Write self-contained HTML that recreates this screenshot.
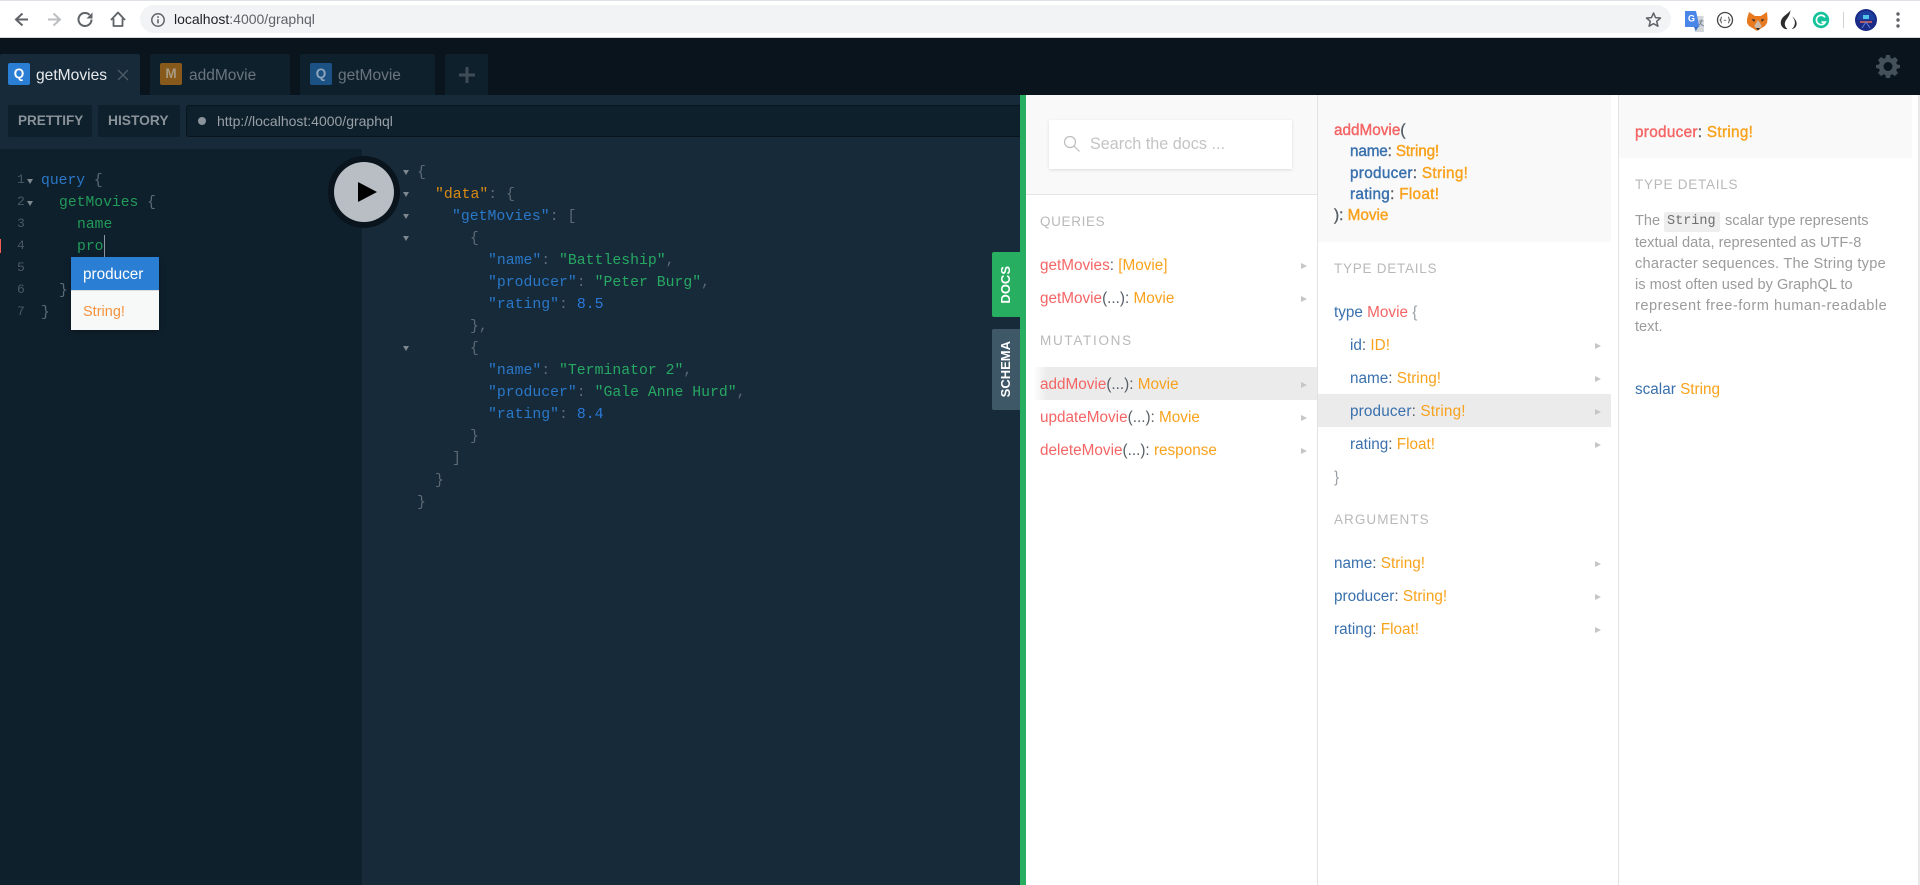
<!DOCTYPE html>
<html><head><meta charset="utf-8"><title>GraphQL Playground</title>
<style>
html,body{margin:0;padding:0;width:1920px;height:885px;overflow:hidden;background:#0f202d;font-family:"Liberation Sans",sans-serif}
.a{position:absolute}
.t{position:absolute;white-space:pre;line-height:22px;font-size:15.3px}
.m{position:absolute;white-space:pre;line-height:22px;font-family:"Liberation Mono",monospace;font-size:14.7px;color:#5c6a75}
.x{font-size:14.8px}
.n{color:#4a5863}
.k{color:#2a78c8}.f{color:#219b58}.g{color:#27a862}.o{color:#d98a12}.u{color:#2a78d8}
.r{color:#f56565}.y{color:#f9a21c}.b{color:#3970ad}.d{color:#555e66}
.s{-webkit-text-stroke:.4px currentColor}
.h{position:absolute;white-space:pre;line-height:20px;font-size:13.5px;letter-spacing:1.05px;color:#b9b9b9}
.ar{position:absolute;width:0;height:0;border-left:6px solid #c6c6c6;border-top:3.5px solid transparent;border-bottom:3.5px solid transparent}
.fd{position:absolute;width:0;height:0;border-top:5px solid #7d8790;border-left:3.5px solid transparent;border-right:3.5px solid transparent}
.tab{position:absolute;top:54px;height:41px}
.ic{position:absolute;top:63px;width:22px;height:22px;border-radius:2px;font-weight:700;font-size:13.5px;line-height:22px;text-align:center}
.p{position:absolute;color:#9b9b9b;white-space:pre;line-height:21px;font-size:14.6px;left:1635px}
</style></head><body>

<!-- browser chrome -->
<div class="a" style="left:0;top:0;width:1920px;height:38px;background:#fff"></div>
<div class="a" style="left:0;top:0;width:1920px;height:1px;background:#dee1e6"></div>
<div class="a" style="left:0;top:37px;width:1920px;height:1px;background:#d4d6da"></div>
<svg class="a" style="left:0;top:0" width="180" height="38" viewBox="0 0 180 38" fill="none">
<path d="M28 19.5H17M22.5 13.5L16 19.5l6.500 6" stroke="#5f6368" stroke-width="2"/>
<path d="M48 19.500H59M53.500 13.500L60 19.500l-6.500 6" stroke="#bcbec0" stroke-width="2"/>
<path d="M91.500 19.500a6.500 6.500 0 1 1-1.900-4.600" stroke="#5f6368" stroke-width="2"/>
<path d="M92.500 12.500v6h-6z" fill="#5f6368"/>
<path d="M111 20l7-7.500 7 7.500M113.500 18.500V26h9v-7.500" stroke="#5f6368" stroke-width="1.800" stroke-linejoin="round"/>
</svg>
<div class="a" style="left:140px;top:5px;width:1531px;height:28px;border-radius:14px;background:#f1f3f4"></div>
<svg class="a" style="left:150px;top:12px" width="16" height="16" viewBox="0 0 16 16" fill="none"><circle cx="8" cy="8" r="6.200" stroke="#5f6368" stroke-width="1.500"/><path d="M8 7.200v4.200M8 4.300v1.600" stroke="#5f6368" stroke-width="1.600"/></svg>
<div class="t" style="left:174px;top:8px;font-size:14px;color:#5f6368"><span style="color:#202124">localhost</span>:4000/graphql</div>
<svg class="a" style="left:1645px;top:11px" width="17" height="17" viewBox="0 0 17 17" fill="none"><path d="M8.500 2l2 4.600 5 .4-3.800 3.300 1.200 4.900-4.400-2.600-4.400 2.600 1.200-4.900L1.500 7l5-.4z" stroke="#5f6368" stroke-width="1.500" stroke-linejoin="round"/></svg>
<svg class="a" style="left:1680px;top:6px" width="240" height="28" viewBox="0 0 240 28" fill="none">
<path d="M13 10h10.500l.500 16h-9z" fill="#d2d5d9"/><path d="M5 5h11l3.500 16H5z" fill="#4a86e8"/><path d="M14 21l1.800 4 2.500-4z" fill="#3a6fc4"/>
<text x="8" y="15.500" font-family="Liberation Sans" font-size="9" font-weight="700" fill="#fff">G</text><path d="M19 15h4.500M21.500 13.500c-.2 3-1.500 5-3 6M20 16c.6 2 2 3.300 3.800 4" stroke="#7d8a98" stroke-width="1"/>
<circle cx="45" cy="14" r="7.500" stroke="#444" stroke-width="1.300"/><path d="M41.800 11c-1 0-.6 2.700-1.400 3 .8.300.4 3 1.400 3M48.200 11c1 0 .6 2.700 1.400 3-.8.300-.4 3-1.400 3" stroke="#444" stroke-width="1"/><path d="M43.800 14.300h2.400" stroke="#777" stroke-width="1"/>
<path d="M69 6l6 4h6l6-4 .6 7-.6 4-2 3-5 3-2 1.500h-2L74 23l-5-3-2-3 0-4z" fill="#e8791f"/><path d="M78 14l-3.800 6 2 2.500h3.600l2-2.500z" fill="#cdb9a8"/><path d="M71.500 13l3.500 .5-.8 2.500zM84.500 13l-3.500 .5 .8 2.500z" fill="#35312f"/><path d="M76 22l2 2.500 2-2.500z" fill="#2c2621"/>
<path d="M110.500 4c-1.500 3-6 5-8.500 8.500-2 3.200-1.500 7 1 9.200 1 .9 2.800 1.800 4.500 1.300-2.400-1.800-3.400-4.600-2.200-7.500 1-2.500 4.500-5 5.200-11.500z" fill="#2c2c2c"/><path d="M112 10.500c2.500 2.500 3.500 5.500 2.600 8.200-.4 1.500-1.400 3.300-3 4.300 2.500 0 4.700-1.900 5-4.700.4-3-1.800-6-4.600-7.800z" fill="#2c2c2c"/>
<circle cx="141" cy="14" r="8.200" fill="#15c39a"/><path d="M145 11.300a4.700 4.700 0 1 0 .3 4.800h-3.800" stroke="#fff" stroke-width="1.700"/>
<rect x="163" y="6" width="1" height="16" fill="#cfd1d4"/>
<circle cx="186" cy="14" r="11" fill="#1a2a85"/><path d="M186 5a9 9 0 0 1 9 9h-18a9 9 0 0 1 9-9z" fill="#1d3fa0"/><rect x="183" y="9" width="6" height="4" fill="#4fc3e8"/><path d="M180 16h12" stroke="#e56b5a" stroke-width="1.500"/><path d="M182 22l4-6 4 6" stroke="#5f82d8" stroke-width="1"/>
<circle cx="218" cy="8" r="1.700" fill="#5f6368"/><circle cx="218" cy="14" r="1.700" fill="#5f6368"/><circle cx="218" cy="20" r="1.700" fill="#5f6368"/>
</svg>

<!-- tab bar -->
<div class="a" style="left:0;top:38px;width:1920px;height:57px;background:#0a141c"></div>
<div class="tab" style="left:0;width:140px;background:#172a3a;border-radius:2px 2px 0 0"></div>
<div class="tab" style="left:150px;width:140px;background:#0f202d;border-radius:2px 2px 0 0"></div>
<div class="tab" style="left:300px;width:135px;background:#0f202d;border-radius:2px 2px 0 0"></div>
<div class="tab" style="left:445px;width:43px;background:#0f202d;border-radius:2px 2px 0 0"></div>
<div class="ic" style="left:8px;background:#2a7ed3;color:#fff">Q</div>
<div class="ic" style="left:160px;background:#87591a;color:#a99b83">M</div>
<div class="ic" style="left:310px;background:#1c5184;color:#8fa6bd">Q</div>
<div class="t" style="left:36px;top:65px;color:#e8eaec;font-size:15.6px">getMovies</div>
<svg class="a" style="left:117px;top:69px" width="12" height="12" fill="none"><path d="M1 1l10 10M11 1L1 11" stroke="#4f5b65" stroke-width="1.300"/></svg>
<div class="t" style="left:189px;top:65px;color:#6a757e;font-size:15.5px">addMovie</div>
<div class="t" style="left:338px;top:65px;color:#6a757e;font-size:15.5px">getMovie</div>
<svg class="a" style="left:458px;top:66px" width="18" height="18" fill="none"><path d="M9 1v16M1 9h16" stroke="#3f4c57" stroke-width="3"/></svg>
<svg class="a" style="left:1876px;top:54px" width="24" height="24" viewBox="0 0 24 24"><path fill="#44505a" fill-rule="evenodd" d="M10 1h4l.6 3.100 1.700.7L19 3l3 3-1.800 2.700.7 1.700L24 11v3l-3.100.6-.7 1.700L22 19l-3 3-2.700-1.800-1.700.7L14 24h-4l-.6-3.100-1.700-.7L5 22l-3-3 1.800-2.700-.7-1.700L0 14v-3l3.100-.6.700-1.700L2 6l3-3 2.700 1.800 1.700-.7zM12 8a4.500 4.500 0 1 0 0 9 4.500 4.500 0 0 0 0-9z"/></svg>

<!-- editor toolbar -->
<div class="a" style="left:0;top:95px;width:1020px;height:790px;background:#172a3a"></div>
<div class="a" style="left:8px;top:105px;width:84px;height:32px;background:#0f202d;border-radius:2px"></div>
<div class="a" style="left:98px;top:105px;width:82px;height:32px;background:#0f202d;border-radius:2px"></div>
<div class="t" style="left:18px;top:110px;font-size:13.5px;font-weight:700;color:#8a9299">PRETTIFY</div>
<div class="t" style="left:108px;top:110px;font-size:13.8px;font-weight:700;color:#8a9299">HISTORY</div>
<div class="a" style="left:186px;top:105px;width:834px;background:#0f202d;border:solid #0a141c;border-width:1px 0 1px 1px;border-radius:3px 0 0 3px;box-sizing:content-box;height:30px"></div>
<div class="a" style="left:198px;top:117px;width:8px;height:8px;border-radius:50%;background:#8b949b"></div>
<div class="t" style="left:217px;top:110px;font-size:14px;color:#98a0a6">http://localhost:4000/graphql</div>

<!-- query editor -->
<div class="a" style="left:0;top:149px;width:362px;height:736px;background:#0f202d"></div>
<div class="a" style="left:0;top:239px;width:1px;height:14px;background:#f25c54"></div>
<div class="m n" style="left:17px;top:169px;font-size:13px">1</div><div class="m n" style="left:17px;top:191px;font-size:13px">2</div><div class="m n" style="left:17px;top:213px;font-size:13px">3</div><div class="m n" style="left:17px;top:235px;font-size:13px">4</div><div class="m n" style="left:17px;top:257px;font-size:13px">5</div><div class="m n" style="left:17px;top:279px;font-size:13px">6</div><div class="m n" style="left:17px;top:301px;font-size:13px">7</div>
<div class="fd" style="left:27px;top:179px"></div><div class="fd" style="left:27px;top:201px"></div>
<div class="m" style="left:41px;top:170px"><span class="k">query</span> {</div>
<div class="m" style="left:59px;top:192px"><span class="f">getMovies</span> {</div>
<div class="m f" style="left:77px;top:214px">name</div>
<div class="m f" style="left:77px;top:236px">pro</div>
<div class="m" style="left:59px;top:280px">}</div>
<div class="m" style="left:41px;top:302px">}</div>
<div class="a" style="left:104px;top:235px;width:1px;height:22px;background:#8d97a0"></div>

<div class="a" style="left:71px;top:257px;width:88px;height:73px;background:#f7f8f8;box-shadow:0 2px 6px rgba(0,0,0,.3)"></div>
<div class="a" style="left:71px;top:257px;width:88px;height:33px;background:#2a7ed3"></div>
<div class="a" style="left:71px;top:290px;width:88px;height:1px;background:#d9dcde"></div>
<div class="t" style="left:83px;top:264px;color:#fff;font-size:15.3px">producer</div>
<div class="t" style="left:83px;top:301px;color:#f5933f;font-size:14.5px">String!</div>

<!-- result -->
<div class="fd" style="left:403px;top:170px"></div><div class="fd" style="left:403px;top:192px"></div><div class="fd" style="left:403px;top:214px"></div><div class="fd" style="left:403px;top:236px"></div><div class="fd" style="left:403px;top:346px"></div>
<div class="m x" style="left:417px;top:162px">{</div>
<div class="m x" style="left:435px;top:184px"><span class="o">"data"</span>: {</div>
<div class="m x" style="left:452px;top:206px"><span class="k">"getMovies"</span>: [</div>
<div class="m x" style="left:470px;top:228px">{</div>
<div class="m x" style="left:488px;top:250px"><span class="k">"name"</span>: <span class="g">"Battleship"</span>,</div>
<div class="m x" style="left:488px;top:272px"><span class="k">"producer"</span>: <span class="g">"Peter Burg"</span>,</div>
<div class="m x" style="left:488px;top:294px"><span class="k">"rating"</span>: <span class="u">8.5</span></div>
<div class="m x" style="left:470px;top:316px">},</div>
<div class="m x" style="left:470px;top:338px">{</div>
<div class="m x" style="left:488px;top:360px"><span class="k">"name"</span>: <span class="g">"Terminator 2"</span>,</div>
<div class="m x" style="left:488px;top:382px"><span class="k">"producer"</span>: <span class="g">"Gale Anne Hurd"</span>,</div>
<div class="m x" style="left:488px;top:404px"><span class="k">"rating"</span>: <span class="u">8.4</span></div>
<div class="m x" style="left:470px;top:426px">}</div>
<div class="m x" style="left:452px;top:448px">]</div>
<div class="m x" style="left:435px;top:470px">}</div>
<div class="m x" style="left:417px;top:492px">}</div>

<!-- play button -->
<div class="a" style="left:328px;top:156px;width:72px;height:72px;border-radius:50%;background:#0a141c"></div>
<div class="a" style="left:334px;top:162px;width:60px;height:60px;border-radius:50%;background:#b9bdc4"></div>
<svg class="a" style="left:358px;top:182px" width="19" height="20"><path d="M0 0L19 10L0 20z" fill="#000"/></svg>

<!-- side tabs -->
<div class="a" style="left:992px;top:252px;width:28px;height:65px;background:#27ae60;border-radius:2px 0 0 2px"></div>
<div class="a" style="left:992px;top:329px;width:28px;height:81px;background:#3f5868;border-radius:2px 0 0 2px"></div>
<div class="a" style="left:992px;top:252px;width:28px;height:65px;display:flex;align-items:center;justify-content:center"><span style="writing-mode:vertical-rl;transform:rotate(180deg);color:#fff;font-weight:700;font-size:13px;line-height:28px">DOCS</span></div>
<div class="a" style="left:992px;top:329px;width:28px;height:81px;display:flex;align-items:center;justify-content:center"><span style="writing-mode:vertical-rl;transform:rotate(180deg);color:#fff;font-weight:700;font-size:13px;line-height:28px">SCHEMA</span></div>

<!-- docs panel -->
<div class="a" style="left:1020px;top:95px;width:6px;height:790px;background:#27ae60"></div>
<div class="a" style="left:1026px;top:95px;width:894px;height:790px;background:#fff"></div>
<div class="a" style="left:1317px;top:95px;width:1px;height:790px;background:#e2e2e2"></div>
<div class="a" style="left:1618px;top:95px;width:1px;height:790px;background:#e2e2e2"></div>
<div class="a" style="left:1918px;top:95px;width:2px;height:790px;background:#e8e8e8"></div>

<!-- column 1 -->
<div class="a" style="left:1026px;top:95px;width:291px;height:99px;background:#f9f9f9;border-bottom:1px solid #e5e5e5"></div>
<div class="a" style="left:1049px;top:120px;width:243px;height:49px;background:#fff;box-shadow:0 1px 3px rgba(0,0,0,.12)"></div>
<svg class="a" style="left:1063px;top:135px" width="18" height="18" fill="none"><circle cx="7" cy="7" r="5.500" stroke="#bdbdbd" stroke-width="1.200"/><path d="M11 11l5.500 5.500" stroke="#bdbdbd" stroke-width="1.200"/></svg>
<div class="t" style="left:1090px;top:133px;font-size:16.2px;color:#c4c4c4">Search the docs ...</div>
<div class="h" style="left:1040px;top:212px;letter-spacing:.65px">QUERIES</div>
<div class="t" style="left:1040px;top:255px"><span class="r">getMovies</span><span class="d">: </span><span class="y">[Movie]</span></div>
<div class="t" style="left:1040px;top:288px"><span class="r">getMovie</span><span class="d">(...): </span><span class="y">Movie</span></div>
<div class="h" style="left:1040px;top:331px;letter-spacing:1.7px">MUTATIONS</div>
<div class="a" style="left:1033px;top:367px;width:284px;height:33px;background:linear-gradient(90deg,#fff 0,#ebebeb 14px)"></div>
<div class="t" style="left:1040px;top:374px"><span class="r">addMovie</span><span class="d">(...): </span><span class="y">Movie</span></div>
<div class="t" style="left:1040px;top:407px"><span class="r">updateMovie</span><span class="d">(...): </span><span class="y">Movie</span></div>
<div class="t" style="left:1040px;top:440px"><span class="r">deleteMovie</span><span class="d">(...): </span><span class="y">response</span></div>
<div class="ar" style="left:1301px;top:263px"></div><div class="ar" style="left:1301px;top:296px"></div><div class="ar" style="left:1301px;top:382px"></div><div class="ar" style="left:1301px;top:415px"></div><div class="ar" style="left:1301px;top:448px"></div>

<!-- column 2 -->
<div class="a" style="left:1318px;top:95px;width:293px;height:147px;background:#f9f9f9"></div>
<div class="t s" style="left:1334px;top:120px"><span class="r">addMovie</span><span class="d">(</span></div>
<div class="t s" style="left:1350px;top:141px;letter-spacing:-.15px"><span class="b">name</span><span class="d">: </span><span class="y">String!</span></div>
<div class="t s" style="left:1350px;top:163px;letter-spacing:.3px"><span class="b">producer</span><span class="d">: </span><span class="y">String!</span></div>
<div class="t s" style="left:1350px;top:184px;letter-spacing:.3px"><span class="b">rating</span><span class="d">: </span><span class="y">Float!</span></div>
<div class="t s" style="left:1334px;top:205px"><span class="d">): </span><span class="y">Movie</span></div>
<div class="h" style="left:1334px;top:259px;letter-spacing:.75px">TYPE DETAILS</div>
<div class="t" style="left:1334px;top:302px"><span class="b">type</span> <span class="r">Movie</span> <span style="color:#9aa0a6">{</span></div>
<div class="t" style="left:1350px;top:335px"><span class="b">id</span><span class="d">: </span><span class="y">ID!</span></div>
<div class="t" style="left:1350px;top:368px"><span class="b">name</span><span class="d">: </span><span class="y">String!</span></div>
<div class="a" style="left:1318px;top:394px;width:293px;height:33px;background:#ebebeb"></div>
<div class="t" style="left:1350px;top:401px;letter-spacing:.15px"><span class="b">producer</span><span class="d">: </span><span class="y">String!</span></div>
<div class="t" style="left:1350px;top:434px"><span class="b">rating</span><span class="d">: </span><span class="y">Float!</span></div>
<div class="t" style="left:1334px;top:467px;color:#9aa0a6">}</div>
<div class="ar" style="left:1595px;top:343px"></div><div class="ar" style="left:1595px;top:376px"></div><div class="ar" style="left:1595px;top:409px"></div><div class="ar" style="left:1595px;top:442px"></div>
<div class="h" style="left:1334px;top:510px">ARGUMENTS</div>
<div class="t" style="left:1334px;top:553px"><span class="b">name</span><span class="d">: </span><span class="y">String!</span></div>
<div class="t" style="left:1334px;top:586px"><span class="b">producer</span><span class="d">: </span><span class="y">String!</span></div>
<div class="t" style="left:1334px;top:619px"><span class="b">rating</span><span class="d">: </span><span class="y">Float!</span></div>
<div class="ar" style="left:1595px;top:561px"></div><div class="ar" style="left:1595px;top:594px"></div><div class="ar" style="left:1595px;top:627px"></div>

<!-- column 3 -->
<div class="a" style="left:1619px;top:95px;width:293px;height:63px;background:#f9f9f9"></div>
<div class="t s" style="left:1635px;top:122px;letter-spacing:.3px"><span class="r">producer</span><span class="d">: </span><span class="y">String!</span></div>
<div class="h" style="left:1635px;top:175px;letter-spacing:.75px">TYPE DETAILS</div>
<div class="a" style="left:1664px;top:212px;width:56px;height:20px;background:#eee;border-radius:2px"></div>
<div class="p" style="top:211px">The</div>
<div class="m" style="left:1667px;top:211px;font-size:13.5px;color:#6f6f6f">String</div>
<div class="p" style="top:211px;left:1725px">scalar type represents</div>
<div class="p" style="top:233px">textual data, represented as UTF-8</div>
<div class="p" style="top:254px;letter-spacing:.24px">character sequences. The String type</div>
<div class="p" style="top:275px">is most often used by GraphQL to</div>
<div class="p" style="top:296px;letter-spacing:.5px">represent free-form human-readable</div>
<div class="p" style="top:317px">text.</div>
<div class="t" style="left:1635px;top:379px"><span class="b">scalar</span> <span class="y">String</span></div>
</body></html>
